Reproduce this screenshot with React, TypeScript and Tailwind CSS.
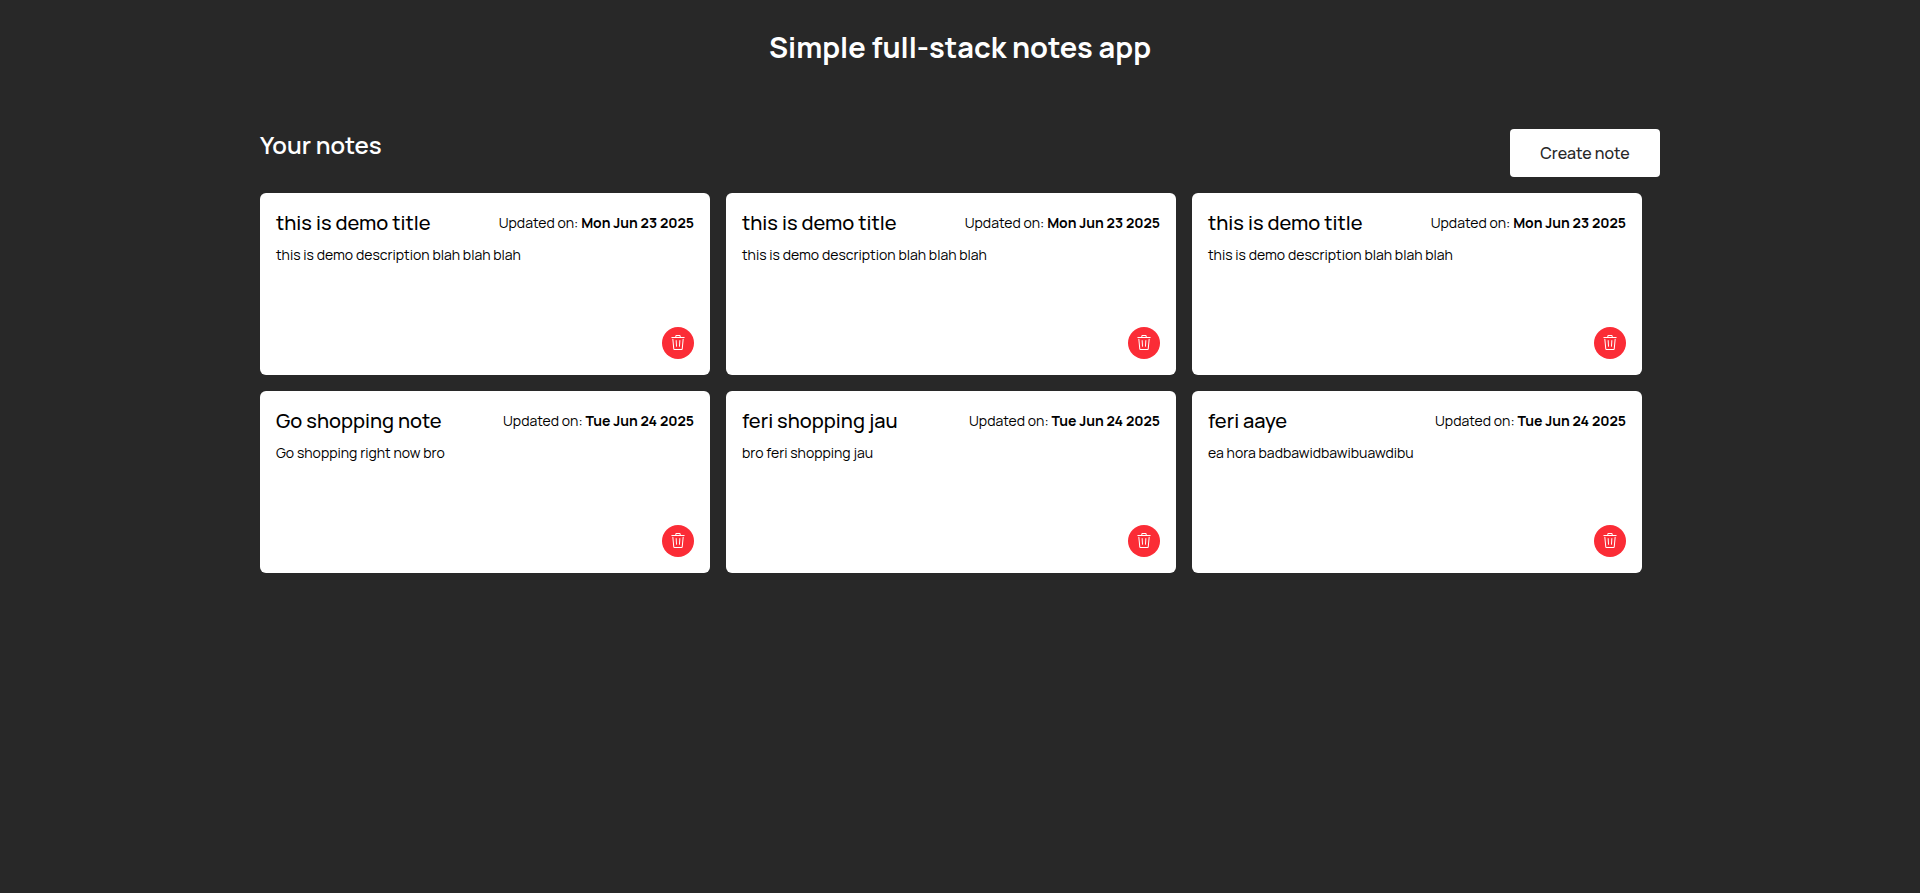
import { GoTrash } from "react-icons/go";

type Note = { id: number; title: string; description: string; updatedOn: string };

const notes: Note[] = [
  { id: 1, title: "this is demo title", description: "this is demo description blah blah blah", updatedOn: "Mon Jun 23 2025" },
  { id: 2, title: "this is demo title", description: "this is demo description blah blah blah", updatedOn: "Mon Jun 23 2025" },
  { id: 3, title: "this is demo title", description: "this is demo description blah blah blah", updatedOn: "Mon Jun 23 2025" },
  { id: 4, title: "Go shopping note", description: "Go shopping right now bro", updatedOn: "Tue Jun 24 2025" },
  { id: 5, title: "feri shopping jau", description: "bro feri shopping jau", updatedOn: "Tue Jun 24 2025" },
  { id: 6, title: "feri aaye", description: "ea hora badbawidbawibuawdibu", updatedOn: "Tue Jun 24 2025" },
];

function NoteCard({ note }: { note: Note }) {
  return (
    <article className="flex min-h-[182px] w-full max-w-[450px] flex-col gap-2 rounded-md bg-white p-4 text-black">
      <div className="flex items-center justify-between">
        <h3 className="text-xl leading-7 font-medium">{note.title}</h3>
        <p className="text-sm leading-5">
          Updated on: <span className="font-bold">{note.updatedOn}</span>
        </p>
      </div>
      <p className="text-sm leading-5">{note.description}</p>
      <button
        type="button"
        aria-label="Delete note"
        className="mt-auto cursor-pointer self-end rounded-full bg-[#fb2c36] p-2 text-white"
      >
        <GoTrash size={16} />
      </button>
    </article>
  );
}

export default function App() {
  return (
    <div className="min-h-screen bg-[#282828] px-4 pt-[29px] font-['Manrope','Inter',sans-serif] text-white">
      <h1 className="text-center text-[29px] leading-9 font-bold">Simple full-stack notes app</h1>
      <main className="mx-auto mt-16 max-w-[1400px]">
        <div className="flex items-start justify-between">
          <h2 className="text-2xl leading-8 font-semibold">Your notes</h2>
          <button
            type="button"
            className="h-12 min-w-[150px] cursor-pointer rounded-sm bg-white px-7 text-base font-medium text-[#282828]"
          >
            Create note
          </button>
        </div>
        <section aria-label="Notes" className="mt-4 flex flex-wrap gap-4">
          {notes.map((note) => (
            <NoteCard key={note.id} note={note} />
          ))}
        </section>
      </main>
    </div>
  );
}
